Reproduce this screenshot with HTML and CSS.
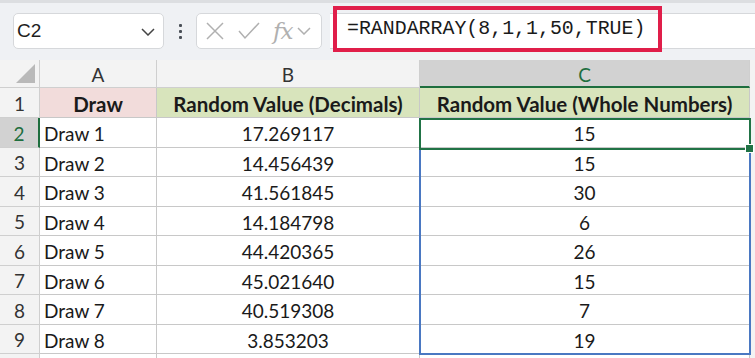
FILE: index.html
```html
<!DOCTYPE html>
<html>
<head>
<meta charset="utf-8">
<link rel="stylesheet" href="styles.css">
</head>
<body>
<div class="app">
  <div class="fbar">
    <div class="namebox">
      <span class="nb-text">C2</span>
      <svg class="chev" width="14" height="8" viewBox="0 0 14 8"><path d="M1 1 L7 7 L13 1" fill="none" stroke="#444" stroke-width="1.5"/></svg>
    </div>
    <div class="dots"><i></i><i></i><i></i></div>
    <div class="fxbox">
      <svg width="20" height="20" viewBox="0 0 20 20"><path d="M2 2 L18 18 M18 2 L2 18" stroke="#b0b0b0" stroke-width="1.5" fill="none"/></svg>
      <svg width="22" height="18" viewBox="0 0 22 18"><path d="M1 9 L7 16 L21 1" stroke="#b0b0b0" stroke-width="1.5" fill="none"/></svg>
      <span class="fx">fx</span>
      <svg width="14" height="8" viewBox="0 0 14 8"><path d="M1 1 L7 7 L13 1" fill="none" stroke="#b0b0b0" stroke-width="1.5"/></svg>
    </div>
    <div class="formula">
      <div class="ftext">=RANDARRAY(8,1,1,50,TRUE)</div>
    </div>
  </div>
  <div class="sheetwrap">
    <div class="sheet">
      <div class="ch corner"><span class="tri"></span></div>
      <div class="ch">A</div>
      <div class="ch">B</div>
      <div class="ch sel">C</div>

      <div class="rh r1">1</div>
      <div class="c r1 hdr pink">Draw</div>
      <div class="c r1 hdr green">Random Value (Decimals)</div>
      <div class="c r1 hdr green">Random Value (Whole Numbers)</div>

      <div class="rh selr">2</div>
      <div class="c">Draw 1</div>
      <div class="c ctr">17.269117</div>
      <div class="c ctr">15</div>

      <div class="rh">3</div>
      <div class="c">Draw 2</div>
      <div class="c ctr">14.456439</div>
      <div class="c ctr">15</div>

      <div class="rh">4</div>
      <div class="c">Draw 3</div>
      <div class="c ctr">41.561845</div>
      <div class="c ctr">30</div>

      <div class="rh">5</div>
      <div class="c">Draw 4</div>
      <div class="c ctr">14.184798</div>
      <div class="c ctr">6</div>

      <div class="rh">6</div>
      <div class="c">Draw 5</div>
      <div class="c ctr">44.420365</div>
      <div class="c ctr">26</div>

      <div class="rh">7</div>
      <div class="c">Draw 6</div>
      <div class="c ctr">45.021640</div>
      <div class="c ctr">15</div>

      <div class="rh">8</div>
      <div class="c">Draw 7</div>
      <div class="c ctr">40.519308</div>
      <div class="c ctr">7</div>

      <div class="rh">9</div>
      <div class="c">Draw 8</div>
      <div class="c ctr">3.853203</div>
      <div class="c ctr">19</div>

      <div class="rh tail"></div>
      <div class="c tail"></div>
      <div class="c tail"></div>
      <div class="c tail"></div>

      <div class="range"></div>
      <div class="active"><span class="handle"></span></div>
    </div>
  </div>
</div>
</body>
</html>
```
FILE: styles.css
```css
html, body { margin: 0; padding: 0; }
body { width: 755px; height: 358px; overflow: hidden; background: #f3f3f3; }
.app { width: 755px; height: 358px; display: flex; flex-direction: column; }

.fbar {
  height: 57px;
  border-top: 3px solid #dcdee1;
  background: #eff1f4;
  display: flex;
  align-items: flex-start;
  box-sizing: content-box;
}
.namebox {
  margin: 10px 0 0 13px;
  width: 151px; height: 36px;
  box-sizing: border-box;
  background: #fff;
  border: 1px solid #d6d8db;
  border-radius: 5px;
  display: flex; align-items: center; justify-content: space-between;
  padding: 0 8px 0 3px;
}
.nb-text { font-family: "Liberation Sans", Arial, sans-serif; font-size: 19px; color: #1e1e1e; }
.chev { margin-top: 2px; }
.dots { width: 32px; height: 36px; margin-top: 10px; display: flex; flex-direction: column; align-items: center; justify-content: center; gap: 3px; }
.dots i { width: 3px; height: 3px; background: #4a4f57; border-radius: 1px; display: block; }
.fxbox {
  margin-top: 10px;
  width: 126px; height: 36px;
  box-sizing: border-box;
  background: #fff;
  border: 1px solid #d6d8db;
  border-radius: 5px;
  display: flex; align-items: center;
  padding: 0 4px 0 8px;
  gap: 12px;
}
.fxbox svg:nth-child(2) { margin-left: 1px; }
.fx { font-family: "DejaVu Serif", "Liberation Serif", serif; font-style: italic; font-size: 23px; color: #b0b0b0; letter-spacing: -1px; margin-left: 1px; margin-right: -7px; line-height: 1; }
.formula {
  margin: 10px 0 0 8px;
  flex: 1;
  height: 36px;
  box-sizing: border-box;
  background: #fff;
  border-top: 1px solid #d6d8db;
  border-bottom: 1px solid #d6d8db;
  position: relative;
}
.ftext {
  position: absolute;
  left: 3px; top: -8px;
  width: 329px; height: 46px;
  box-sizing: border-box;
  border: 4px solid #e01e4a;
  font-family: "Liberation Mono", "DejaVu Sans Mono", monospace;
  font-size: 19.9px;
  color: #1a1a1a;
  padding-left: 10px;
  line-height: 38px;
}

.sheetwrap { flex: 1; padding-right: 5px; overflow: hidden; }
.sheet {
  position: relative;
  display: grid;
  grid-template-columns: 40px 117px 263px 330px;
  grid-template-rows: 28px 30px repeat(8, 29.5px) 10px;
  font-family: "Lato", "Liberation Sans", sans-serif;
  font-size: 19px;
  color: #1a1a1a;
  background: #fff;
}
.ch, .rh {
  background: #f3f3f3;
  color: #333;
  border-right: 1px solid #cfcfcf;
  border-bottom: 1px solid #cfcfcf;
  box-sizing: border-box;
  display: flex; align-items: center; justify-content: center;
  font-family: "Lato", "Liberation Sans", sans-serif;
  font-size: 19px;
}
.ch { padding-top: 2px; }
.rh { padding-top: 2px; }
.ch.sel { background: #d2d2d2; color: #1e6e3e; border-bottom: 2px solid #1e6e3e; }
.corner { position: relative; }
.tri {
  position: absolute; right: 4px; bottom: 4px;
  width: 0; height: 0;
  border-left: 19px solid transparent;
  border-bottom: 19px solid #b9b9b9;
}
.rh.selr { background: #d2d2d2; color: #1e6e3e; border-right: 2px solid #1e6e3e; }
.c {
  border-right: 1px solid #c8c8c8;
  border-bottom: 1px solid #c8c8c8;
  box-sizing: border-box;
  display: flex; align-items: center;
  padding-left: 4px;
  white-space: nowrap;
  padding-top: 3px;
}
.ctr { justify-content: center; padding-left: 0; }
.hdr { font-weight: 700; font-size: 20.5px; justify-content: center; padding-left: 0; }
.pink { background: #f2dcdb; }
.green { background: #d8e4bc; }
.tail { border-bottom: none; }
.c.tail { background: #fff; }

.range {
  position: absolute;
  left: 419px; top: 58px;
  width: 332px; height: 237px;
  box-sizing: border-box;
  border: 2px solid #4a78c2;
}
.active {
  position: absolute;
  left: 419px; top: 58px;
  width: 332px; height: 32px;
  box-sizing: border-box;
  border: 2px solid #217346;
}
.handle {
  position: absolute;
  right: -5px; bottom: -5px;
  width: 7px; height: 7px;
  background: #217346;
  border: 1px solid #fff;
}
```
